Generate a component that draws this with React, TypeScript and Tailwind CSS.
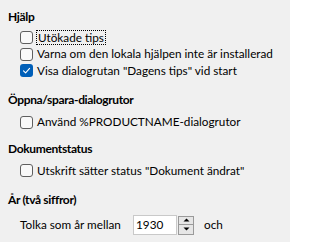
import React from "react";

function Box({ checked }: { checked?: boolean }) {
  if (checked) {
    return (
      <span className="flex h-[13px] w-[13px] shrink-0 items-center justify-center rounded-[3px] bg-[#005fb8]">
        <svg width="9" height="9" viewBox="0 0 9 9" fill="none">
          <path d="M1.5 4.8 L3.6 6.8 L7.6 2.4" stroke="white" strokeWidth="1.1" strokeLinecap="round" strokeLinejoin="round" />
        </svg>
      </span>
    );
  }
  return <span className="block h-[13px] w-[13px] shrink-0 rounded-[3px] border border-[#5f5f5f] bg-[#f9f9f9]" />;
}

function Row({ label, checked, focus }: { label: string; checked?: boolean; focus?: boolean }) {
  return (
    <div className="flex h-[16.5px] items-center whitespace-nowrap pl-[20px]">
      <Box checked={checked} />
      {focus ? (
        <span className="ml-[3px] border border-dotted border-black px-[1px] leading-[13px]">{label}</span>
      ) : (
        <span className="ml-[4px] leading-4">{label}</span>
      )}
    </div>
  );
}

function Heading({ children, className }: { children: React.ReactNode; className?: string }) {
  return (
    <div className={"h-4 whitespace-nowrap pl-[8px] text-[12px] font-bold leading-4 tracking-[-0.35px] " + (className ?? "")}>
      {children}
    </div>
  );
}

export default function App() {
  return (
    <div
      className="h-[242px] w-[290px] overflow-hidden bg-[#f0f0f0] pt-[8.5px] text-[11.75px] text-black"
      style={{ fontFamily: 'Lato, "Noto Sans", sans-serif' }}
    >
      <Heading>Hjälp</Heading>
      <div className="mt-[5px]">
        <Row label="Utökade tips" focus />
        <Row label="Varna om den lokala hjälpen inte är installerad" />
        <Row label='Visa dialogrutan "Dagens tips" vid start' checked />
      </div>
      <Heading className="mt-[13px]">Öppna/spara-dialogrutor</Heading>
      <div className="mt-[6px]">
        <Row label="Använd %PRODUCTNAME-dialogrutor" />
      </div>
      <Heading className="mt-[10.5px]">Dokumentstatus</Heading>
      <div className="mt-[5.5px]">
        <Row label='Utskrift sätter status "Dokument ändrat"' />
      </div>
      <Heading className="mt-[13px]">År (två siffror)</Heading>
      <div className="mt-[7px] flex h-[20px] items-center whitespace-nowrap pl-[20px]">
        <span className="w-[113px] shrink-0 leading-4">Tolka som år mellan</span>
        <div className="flex h-[20px] items-center">
          <div className="flex h-[20px] w-[44px] items-center border border-[#c9c9c9] bg-white pl-[2px] leading-4">1930</div>
          <div className="ml-[1px] flex h-[19px] w-[16px] flex-col">
            <div className="flex h-[9.5px] items-center justify-center border border-[#9a9a9a] bg-[#e6e6e6]">
              <svg width="7" height="4" viewBox="0 0 7 4"><path d="M0.5 3.5 L3.5 0.5 L6.5 3.5 Z" fill="black" /></svg>
            </div>
            <div className="flex h-[9.5px] items-center justify-center border border-t-0 border-[#9a9a9a] bg-[#e6e6e6]">
              <svg width="7" height="4" viewBox="0 0 7 4"><path d="M0.5 0.5 L3.5 3.5 L6.5 0.5 Z" fill="black" /></svg>
            </div>
          </div>
        </div>
        <span className="ml-[10px] leading-4">och</span>
      </div>
    </div>
  );
}
